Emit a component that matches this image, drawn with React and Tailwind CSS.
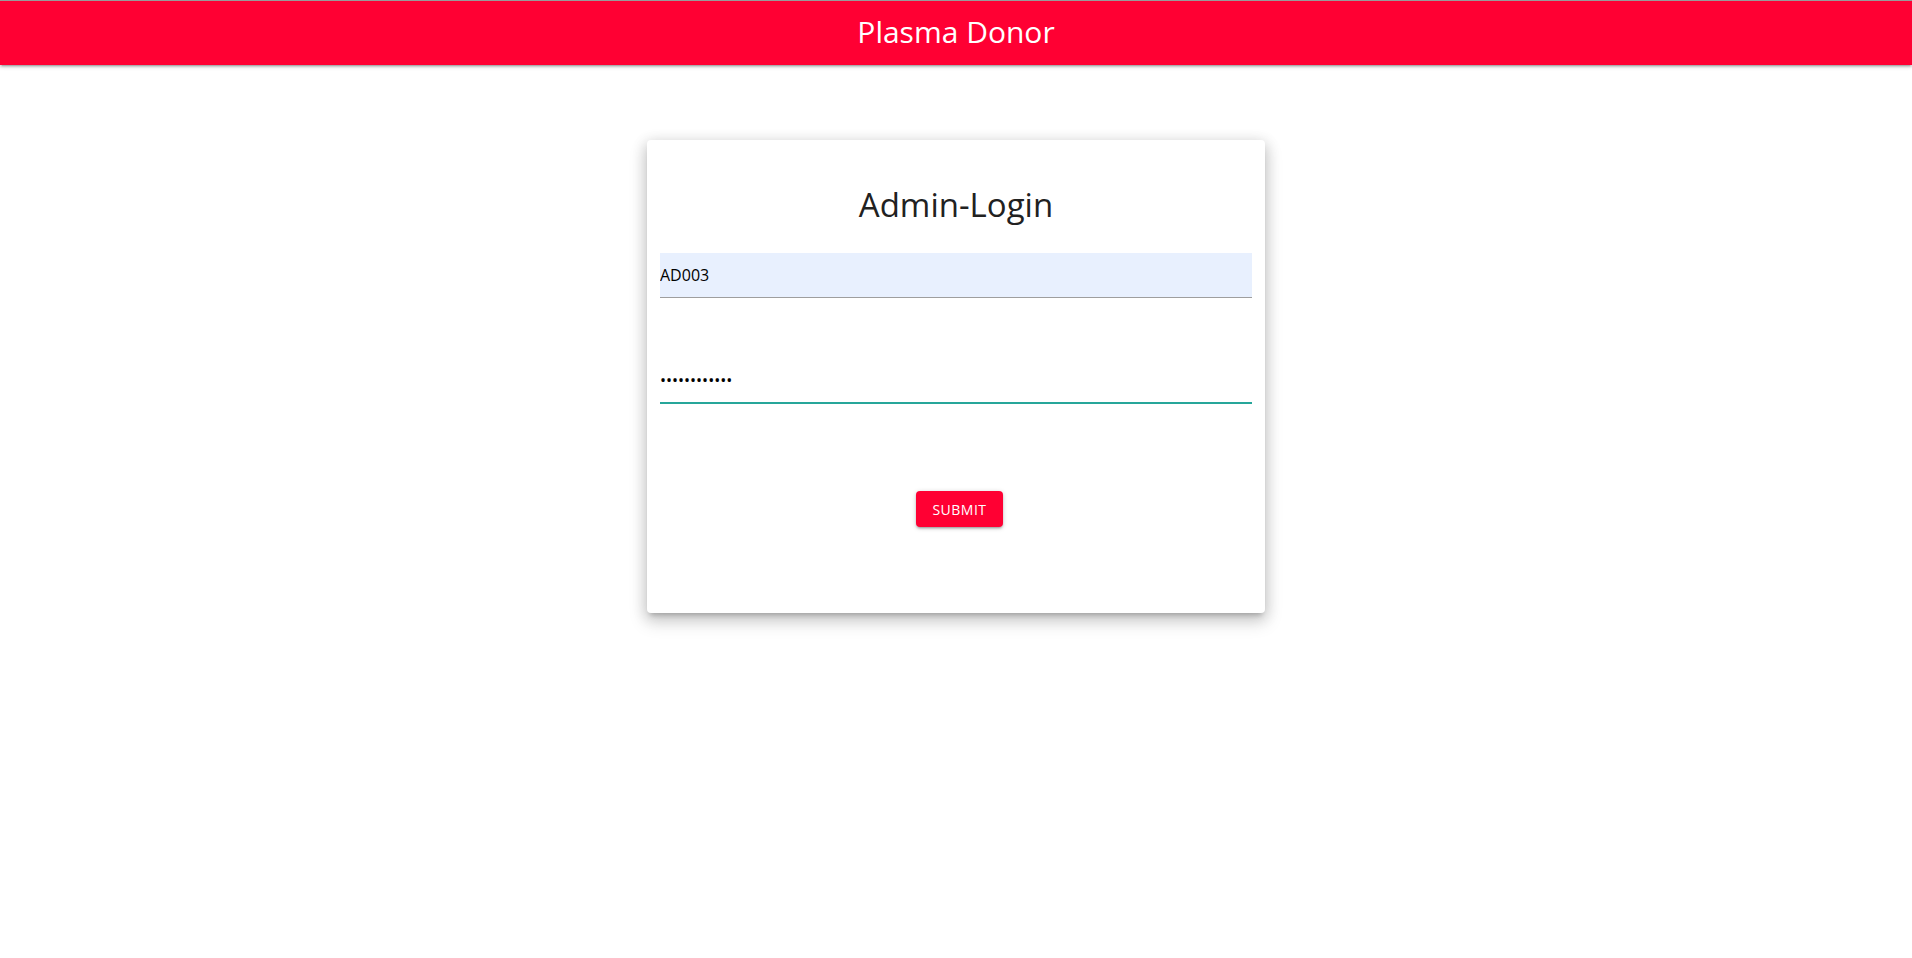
export default function App() {
  return (
    <div className="min-h-screen bg-white" style={{ fontFamily: '"Open Sans", "Noto Sans", sans-serif' }}>
      <nav className="border-t border-[#9a9a9a] bg-[#ff0033] h-[65px] shadow-[0_2px_2px_0_rgba(0,0,0,0.14),0_3px_1px_-2px_rgba(0,0,0,0.12),0_1px_5px_0_rgba(0,0,0,0.2)]">
        <div className="text-center text-white text-[30px] leading-[62px]">Plasma Donor</div>
      </nav>

      <div className="flex justify-center pt-[75px]">
        <div className="w-[618px] bg-white rounded-sm px-[13px] pt-[37px] pb-[86px] shadow-[0_8px_17px_2px_rgba(0,0,0,0.14),0_3px_14px_2px_rgba(0,0,0,0.12),0_5px_5px_-3px_rgba(0,0,0,0.2)]">
          <h4 className="text-center text-[33px] leading-[56px] text-[#212121]">Admin-Login</h4>

          <form className="mt-[20px] flex flex-col" onSubmit={(e) => e.preventDefault()}>
            <input
              type="text"
              defaultValue="AD003"
              className="w-full h-[45px] bg-[#e8f0fe] border-b border-[#9e9e9e] text-[16px] text-black outline-none"
            />
            <input
              type="password"
              defaultValue="adminpass123"
              className="mt-[60px] w-full h-[45px] border-b border-[#26a69a] shadow-[0_1px_0_0_#26a69a] text-[16px] text-black outline-none"
            />
            <div className="flex justify-center mt-[88px]">
              <button
                type="submit"
                className="ml-[7px] h-9 px-4 bg-[#ff0033] text-white text-[14px] uppercase tracking-[0.5px] rounded-sm shadow-[0_2px_2px_0_rgba(0,0,0,0.14),0_3px_1px_-2px_rgba(0,0,0,0.12),0_1px_5px_0_rgba(0,0,0,0.2)]"
              >
                Submit
              </button>
            </div>
          </form>
        </div>
      </div>
    </div>
  );
}
